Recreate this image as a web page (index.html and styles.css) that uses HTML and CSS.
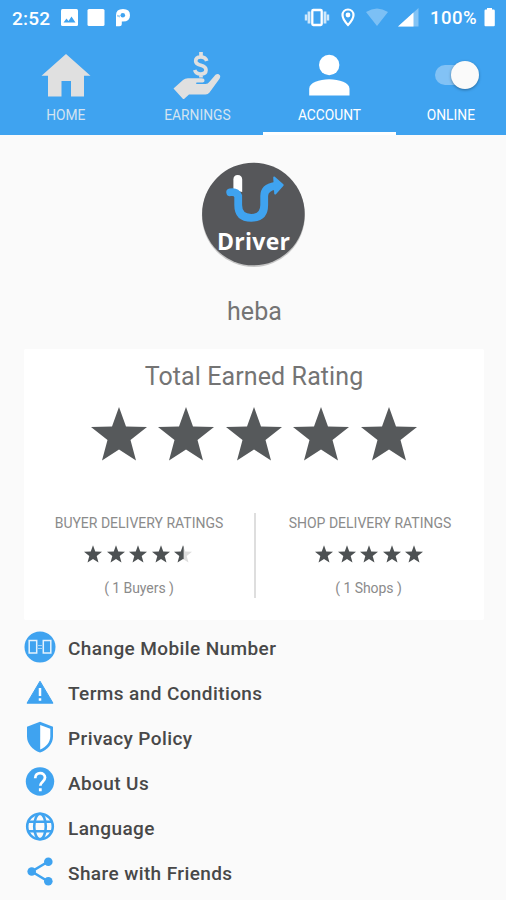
FILE: index.html
```html
<!DOCTYPE html>
<html lang="en">
<head>
<meta charset="utf-8">
<title>Driver account</title>
<link rel="stylesheet" href="styles.css">
</head>
<body>
<svg class="defs" width="0" height="0" aria-hidden="true">
  <symbol id="star" viewBox="0 0 56 54"><path d="M28 0l7 19.500 21 .5-16.500 13L45 53.500 28 42.500 11 53.500l5.500-20.500L0 20l21-.5z"/></symbol>
</svg>
<header class="top">
  <div class="status">
    <span class="time">2:52</span>
    <svg class="left-icons" width="72" height="20" viewBox="60 8 72 20">
      <rect x="61" y="9" width="17" height="17" rx="1.500" fill="#fff"/>
      <path d="M63.500 22.500l3-4 2 2.500 3-4.500 4 6z" fill="#3fa3f0"/>
      <rect x="87.500" y="9" width="17" height="17" rx="1.500" fill="#fff"/>
      <path fill="#fff" d="M116 26.300V15q0-6 7-6 7 0 7 6.200 0 6.300-7 6.300h-1.200v2.300q0 2.500-2.500 2.500z"/>
      <circle cx="122.800" cy="15.200" r="2.300" fill="#3fa3f0"/>
      <path d="M117 14.800l3 .8v2l-3-1z" fill="#3fa3f0" opacity=".5"/>
    </svg>
    <svg class="right-icons" width="116" height="22" viewBox="304 7 116 22">
      <rect x="312.300" y="10" width="9.400" height="15" rx="1" fill="none" stroke="#fff" stroke-width="2.300"/>
      <path d="M309 11.500v12M325 11.500v12" fill="none" stroke="#fff" stroke-width="2.800" opacity=".75"/>
      <path d="M306 14.500v6M328 14.500v6" fill="none" stroke="#fff" stroke-width="2.400" opacity=".75"/>
      <path d="M348 9.500c-3.300 0-5.500 2.500-5.500 5.600 0 4.200 5.500 9.900 5.500 9.900s5.500-5.700 5.500-9.900c0-3.100-2.200-5.600-5.500-5.600z" fill="none" stroke="#fff" stroke-width="2.200"/>
      <circle cx="348" cy="15" r="2.400" fill="#fff"/>
      <path d="M366 12q11-7 22 0L377 26z" fill="#fff" opacity=".32"/>
      <path d="M398 26.500L418.500 8v18.500z" fill="#fff" opacity=".35"/>
      <path d="M398 26.500L413.500 12.500v14z" fill="#fff"/>
    </svg>
    <span class="percent">100%</span>
    <svg class="battery" width="12" height="20" viewBox="0 0 12 20"><path d="M3 2.500V1h5v1.500h1.500q1.300 0 1.300 1.300v14.400q0 1-1 1H1.500q-1 0-1-1V3.800q0-1.300 1.300-1.300z" fill="#fff"/></svg>
  </div>
  <nav class="tabs">
    <div class="tab">
      <svg width="50" height="46" viewBox="41 51 50 46"><path d="M66 53l24.500 21.800H84v20.700H71V80H61.500v15.500H48V74.800h-6.500z" fill="#e0e0e0"/></svg>
      <span>HOME</span>
    </div>
    <div class="tab">
      <svg width="50" height="48" viewBox="173 51 50 48">
        <path d="M174.500 88.500l9.500-8.500q2-1.800 5-1.800h13.500q3 0 3 2.200 0 2-3 2H198q-1 0-1 .8t1 .8h8.500q2.500 0 4-2.200l6-7q2.500-1.800 4.500.700.6 1.500-.5 3.300l-10 13.600q-1.500 2.100-4 2.100H190l-5.500 5z" fill="#e0e0e0"/>
        <path d="M207.700 61q-1-4-6-4-5 0-5 4 0 3 5 4.200 5.300 1.300 5.300 4.800 0 4-5.500 4-4.500 0-5.800-4M202 52v5M202 73.500v4" fill="none" stroke="#e0e0e0" stroke-width="3.700"/>
      </svg>
      <span>EARNINGS</span>
    </div>
    <div class="tab active">
      <svg width="42" height="42" viewBox="308.500 54 42 42" fill="#fff"><circle cx="329.700" cy="65" r="10.200"/><path d="M309.700 95.500v-6.700c0-6 10-9.500 20-9.500s20.300 3.500 20.300 9.500v6.700z"/></svg>
      <span>ACCOUNT</span>
    </div>
    <div class="tab online">
      <div class="switch"><i></i></div>
      <span>ONLINE</span>
    </div>
  </nav>
</header>
<main>
  <svg class="avatar" width="106" height="108" viewBox="200.300 161 106 108">
    <circle cx="253.700" cy="215.500" r="51.500" fill="#aaa" opacity=".65"/>
    <circle cx="253.700" cy="214" r="51.300" fill="#56575a"/>
    <path d="M233.700 190v-10.500q0-4.500 4.300-4.500t4.500 4.500V192z" fill="#fff"/>
    <path d="M230.500 192.300q6-1.200 8 3.700v9q0 12.800 13 12.800T264.500 205v-9q0-8.500 11-10.200" fill="none" stroke="#3fa3f0" stroke-width="7.800" stroke-linecap="round"/>
    <path d="M274.500 177.500l8.500 7.500-7.500 8.500z" fill="#3fa3f0" stroke="#3fa3f0" stroke-width="2" stroke-linejoin="round"/>
    <text class="logo-text" x="253.800" y="249.600" text-anchor="middle" textLength="73">Driver</text>
  </svg>
  <h1>heba</h1>
  <section class="card">
    <h2>Total Earned Rating</h2>
    <div class="stars big">
      <svg><use href="#star"/></svg><svg><use href="#star"/></svg><svg><use href="#star"/></svg><svg><use href="#star"/></svg><svg><use href="#star"/></svg>
    </div>
    <div class="ratings">
      <div class="rating">
        <h3>BUYER DELIVERY RATINGS</h3>
        <div class="stars small">
          <svg><use href="#star"/></svg><svg><use href="#star"/></svg><svg><use href="#star"/></svg><svg><use href="#star"/></svg><svg viewBox="0 0 56 54"><path d="M28 0l7 19.500 21 .5-16.500 13L45 53.500 28 42.500z" fill="#dedede"/><path d="M30 5V43.500L28 42.500 11 53.500l5.500-20.500L0 20l21-.5L28 0z"/></svg>
        </div>
        <p>( 1 Buyers )</p>
      </div>
      <div class="rating shop">
        <h3>SHOP DELIVERY RATINGS</h3>
        <div class="stars small">
          <svg><use href="#star"/></svg><svg><use href="#star"/></svg><svg><use href="#star"/></svg><svg><use href="#star"/></svg><svg><use href="#star"/></svg>
        </div>
        <p>( 1 Shops )</p>
      </div>
    </div>
  </section>
  <ul class="menu">
    <li><svg viewBox="0 0 32 32"><circle cx="16" cy="16" r="15.500"/><g fill="none" stroke="#e4f2fd" stroke-width="1.500"><rect x="5.200" y="9.500" width="7.500" height="12.500"/><rect x="19.300" y="9.500" width="7.500" height="12.500"/><path d="M14 14.500h4M14 17.500h4" stroke-width="1" opacity=".6"/></g></svg><span>Change Mobile Number</span></li>
    <li><svg viewBox="0 0 32 32"><path d="M16 5.200L29 27.200H3z" stroke="#3fa3f0" stroke-linejoin="round"/><path d="M16 12v8M16 22.300v2.500" stroke="#fff" stroke-width="2.500"/></svg><span>Terms and Conditions</span></li>
    <li><svg viewBox="0 0 32 32"><path d="M16 .7l13 5v9.800c0 7.200-5.500 13.500-13 16-7.500-2.500-13-8.800-13-16V5.700z"/><path d="M16.200 4L26.300 7.800v7.700c0 5.600-4.200 10.700-10.100 13z" fill="#fff"/></svg><span>Privacy Policy</span></li>
    <li><svg viewBox="0 0 32 32"><circle cx="16" cy="15.500" r="14.200"/><path d="M11.200 12.200c0-6.800 9.800-6.500 9.800-.6 0 4-4.700 4.200-4.700 8.200M16.300 22.200v3" fill="none" stroke="#fff" stroke-width="2.800"/></svg><span>About Us</span></li>
    <li><svg viewBox="0 0 32 32"><g fill="none" stroke="#3fa3f0" stroke-width="2.600"><circle cx="16" cy="15.500" r="12.800"/><ellipse cx="16" cy="15.500" rx="5.800" ry="12.800"/><path d="M4.500 10.800h23M4.500 20.200h23"/></g></svg><span>Language</span></li>
    <li><svg viewBox="0 0 32 32"><path d="M24.300 5.500L7.700 15.500l16.600 10" fill="none" stroke="#3fa3f0" stroke-width="2.600"/><circle cx="24.300" cy="5.700" r="4.300"/><circle cx="7.700" cy="15.500" r="4.300"/><circle cx="24.300" cy="25.300" r="4.300"/></svg><span>Share with Friends</span></li>
  </ul>
</main>
</body>
</html>
```
FILE: styles.css
```css
* { box-sizing: border-box; }
body {
  margin: 0;
  height: 900px;
  overflow: hidden;
  background: #fafafa;
  font-family: Roboto, "Liberation Sans", sans-serif;
}
h1, h2, h3, p, ul { margin: 0; padding: 0; font-weight: 400; }
svg { display: block; flex: none; }
.defs { display: block; position: absolute; }
.top { height: 135px; background: #3fa3f0; color: #fff; }
.status {
  height: 36px;
  display: flex;
  align-items: center;
  padding-left: 12px;
  font-size: 19px;
  font-weight: 500;
}
.time { width: 48px; letter-spacing: .2px; }
.right-icons { margin-left: 172px; }
.percent { width: 54px; margin-left: 10px; font-size: 18.500px; letter-spacing: .5px; }
.battery { margin: -2px 0 0; }
.tabs {
  height: 99px;
  display: grid;
  grid-template-columns: 131.600px 131.600px 132.600px 1fr;
}
.tab {
  display: grid;
  grid-template-rows: 50px 16px;
  row-gap: 7px;
  align-content: start;
  justify-items: center;
  align-items: center;
  padding-top: 14px;
  font-size: 13.800px;
  line-height: 16px;
  color: #d3e4f1;
}
.active { border-bottom: 3px solid #fff; }
.active, .online { color: #fff; }
.switch {
  width: 42px;
  height: 20px;
  margin-left: 10px;
  border-radius: 10px;
  background: #82c2f5;
  display: flex;
  align-items: center;
  justify-content: flex-end;
}
.switch i {
  width: 28px;
  height: 28px;
  flex: none;
  margin-right: -2px;
  border-radius: 50%;
  background: #fafafa;
  box-shadow: 0 1px 3px rgba(0, 0, 0, .35);
}
main { padding-top: 26px; }
.avatar { margin: 0 auto; }
.logo-text { font: 700 23px "Open Sans", sans-serif; fill: #fff; }
h1 {
  height: 32px;
  margin-top: 27px;
  padding-left: 3px;
  line-height: 32px;
  text-align: center;
  font-size: 25px;
  letter-spacing: .1px;
  color: #747474;
}
.card {
  width: 460px;
  height: 271px;
  margin: 21px 0 0 24px;
  background: #fff;
  border-radius: 2px;
}
h2 {
  padding-top: 12px;
  line-height: 32px;
  text-align: center;
  font-size: 25px;
  letter-spacing: .1px;
  color: #747474;
}
.stars { display: flex; justify-content: center; fill: #56595b; }
.big { gap: 11.500px; margin: 14px 1px 0 0; }
.big svg { width: 56px; height: 54px; }
.ratings { height: 84px; margin-top: 52px; display: grid; grid-template-columns: 230px 230px; }
.rating { display: flex; flex-direction: column; align-items: center; color: #8b8b8b; }
.shop { border-left: 2px solid #dedede; }
h3 { font-size: 14px; line-height: 20px; letter-spacing: 0; white-space: nowrap; }
.small { gap: 4.500px; margin: 12px 2px 0 0; fill: #4d5153; }
.small svg { width: 18px; height: 18px; }
.rating p { margin-top: 15px; font-size: 14px; line-height: 20px; letter-spacing: -.05px; }
.shop p { margin-right: 3px; }
.menu { list-style: none; padding: 5.500px 0 0 24px; }
.menu li { height: 45px; display: flex; align-items: center; font-size: 19px; font-weight: 500; letter-spacing: .4px; color: #484848; }
.menu svg { width: 32px; height: 32px; margin: -2px 12px 0 0; fill: #3fa3f0; }
```
